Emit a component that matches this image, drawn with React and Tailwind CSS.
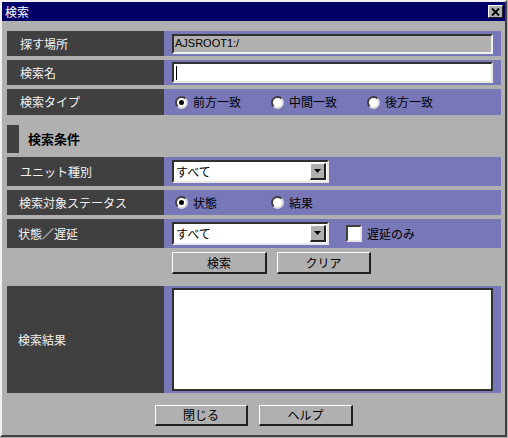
import React from "react";

const jp = { fontFamily: '"Noto Sans CJK JP", "Noto Sans", sans-serif' };

function Row({ label, h, labelPad = "pl-[13px]", children, className = "" }) {
  return (
    <div className={`flex ${h} ${className}`}>
      <div className={`w-[157px] shrink-0 bg-[#404040] text-[#f2f2f2] text-[12px] flex items-center ${labelPad}`}>
        {label}
      </div>
      <div className="flex-1 bg-[#7878b8] flex items-center px-[8px]">{children}</div>
    </div>
  );
}

function Radio({ checked, label }) {
  return (
    <div className="w-[96px] flex items-center gap-[5px] text-[12px] text-black">
      <span className="w-[13px] h-[13px] rounded-full bg-white border-2 border-t-[#404040] border-l-[#404040] border-b-[#d8d8d8] border-r-[#d8d8d8] flex items-center justify-center">
        {checked && <span className="w-[5px] h-[5px] rounded-full bg-black" />}
      </span>
      <span>{label}</span>
    </div>
  );
}

function Select({ value }) {
  return (
    <div className="w-[157px] h-[23px] bg-white border-2 border-t-[#303030] border-l-[#303030] border-b-[#e8e8e8] border-r-[#e8e8e8] flex items-center justify-between">
      <span className="pl-[2px] text-[12px] text-black">{value}</span>
      <span className="w-[16px] h-[17px] mr-[1px] bg-[#b0b0b0] border-t border-l border-t-white border-l-white border-b-2 border-r-2 border-b-[#202020] border-r-[#202020] flex items-center justify-center">
        <svg width="7" height="4" viewBox="0 0 7 4">
          <path d="M0 0h7L3.5 4z" fill="#000" />
        </svg>
      </span>
    </div>
  );
}

function Button({ label, w }) {
  return (
    <button
      className={`${w} h-full bg-[#b0b0b0] border-t border-l border-t-white border-l-white border-b-2 border-r-2 border-b-[#202020] border-r-[#202020] text-[12px] text-black flex items-center justify-center`}
    >
      {label}
    </button>
  );
}

export default function App() {
  return (
    <div className="w-[508px] h-[438px] bg-[#b0b0b0]" style={jp}>
      <div className="w-[507px] h-[437px] flex flex-col border-2 border-t-[#f0f0f0] border-l-[#f0f0f0] border-b-[#404040] border-r-[#404040]">
        {/* Title bar */}
        <div className="h-[19px] bg-[#000066] flex items-center justify-between pl-[3px] pr-[2px]">
          <span className="text-white text-[12px]">検索</span>
          <span className="w-[15px] h-[13px] bg-[#b0b0b0] border-t border-l border-t-white border-l-white border-b border-r border-b-[#202020] border-r-[#202020] flex items-center justify-center">
            <svg width="9" height="8" viewBox="0 0 9 8">
              <path d="M1 0.5l7 7M8 0.5l-7 7" stroke="#000" strokeWidth="2" />
            </svg>
          </span>
        </div>

        <div className="flex flex-col pl-[5px] pr-[4px]">
          <Row label="探す場所" h="h-[25px]" className="mt-[10px]">
            <div className="w-full h-[20px] bg-[#b0b0b0] border-2 border-t-[#303030] border-l-[#303030] border-b-[#f0f0f0] border-r-[#f0f0f0] flex items-center pl-[1px]">
              <span className="text-[11px] text-black" style={{ fontFamily: '"Liberation Sans", Arial, sans-serif' }}>
                AJSROOT1:/
              </span>
            </div>
          </Row>

          <Row label="検索名" h="h-[25px]" className="mt-[4px]">
            <div className="w-full h-[21px] bg-white border-2 border-t-[#303030] border-l-[#303030] border-b-[#e8e8e8] border-r-[#e8e8e8] flex items-center pl-[2px]">
              <span className="w-[1px] h-[14px] bg-black" />
            </div>
          </Row>

          <Row label="検索タイプ" h="h-[26px]" className="mt-[4px]">
            <div className="flex ml-[3px]">
              <Radio checked label="前方一致" />
              <Radio label="中間一致" />
              <Radio label="後方一致" />
            </div>
          </Row>

          {/* Section header */}
          <div className="flex items-center h-[28px] mt-[10px]">
            <span className="w-[12px] h-full bg-[#404040]" />
            <span className="ml-[9px] text-[13px] font-bold text-black">検索条件</span>
          </div>

          <Row label="ユニット種別" h="h-[29px]" className="mt-[4px]">
            <Select value="すべて" />
          </Row>

          <Row label="検索対象ステータス" h="h-[25px]" labelPad="pl-[12px]" className="mt-[4px]">
            <div className="flex ml-[3px]">
              <Radio checked label="状態" />
              <Radio label="結果" />
            </div>
          </Row>

          <Row label="状態／遅延" h="h-[29px]" labelPad="pl-[11px]" className="mt-[4px]">
            <div className="flex items-center">
              <Select value="すべて" />
              <span className="ml-[17px] w-[16px] h-[17px] bg-white border-2 border-t-[#404040] border-l-[#404040] border-b-[#e8e8e8] border-r-[#e8e8e8]" />
              <span className="ml-[5px] text-[12px] text-black">遅延のみ</span>
            </div>
          </Row>

          <div className="flex h-[22px] mt-[4px] pl-[165px] gap-[10px]">
            <Button label="検索" w="w-[95px]" />
            <Button label="クリア" w="w-[94px]" />
          </div>

          <Row label="検索結果" h="h-[107px]" labelPad="pl-[11px]" className="mt-[12px]">
            <div className="w-full h-[103px] bg-white border-2 border-t-[#303030] border-l-[#303030] border-b-[#303030] border-r-[#303030]" />
          </Row>

          <div className="flex justify-center h-[21px] mt-[12px] gap-[11px]">
            <Button label="閉じる" w="w-[93px]" />
            <Button label="ヘルプ" w="w-[94px]" />
          </div>
        </div>
      </div>
    </div>
  );
}
